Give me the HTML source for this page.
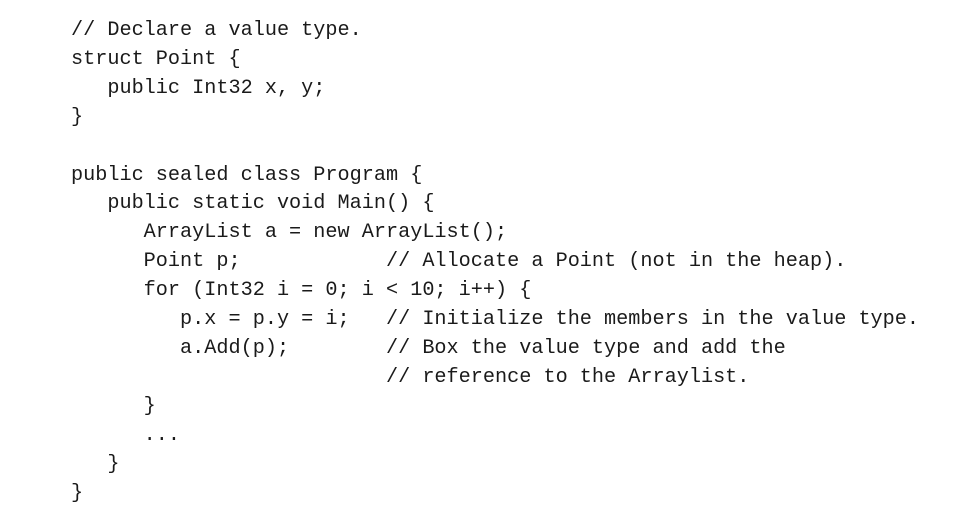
<!DOCTYPE html>
<html><head><meta charset="utf-8"><style>
html,body{margin:0;padding:0;background:#fff;width:977px;height:517px;overflow:hidden}
pre{position:absolute;left:71px;top:17px;margin:0;font-family:"Liberation Mono",monospace;font-size:20.2px;line-height:28.9px;color:#1a1a1a}
</style></head><body>
<pre>// Declare a value type.
struct Point {
   public Int32 x, y;
}

public sealed class Program {
   public static void Main() {
      ArrayList a = new ArrayList();
      Point p;            // Allocate a Point (not in the heap).
      for (Int32 i = 0; i &lt; 10; i++) {
         p.x = p.y = i;   // Initialize the members in the value type.
         a.Add(p);        // Box the value type and add the
                          // reference to the Arraylist.
      }
      ...
   }
}</pre>
</body></html>
